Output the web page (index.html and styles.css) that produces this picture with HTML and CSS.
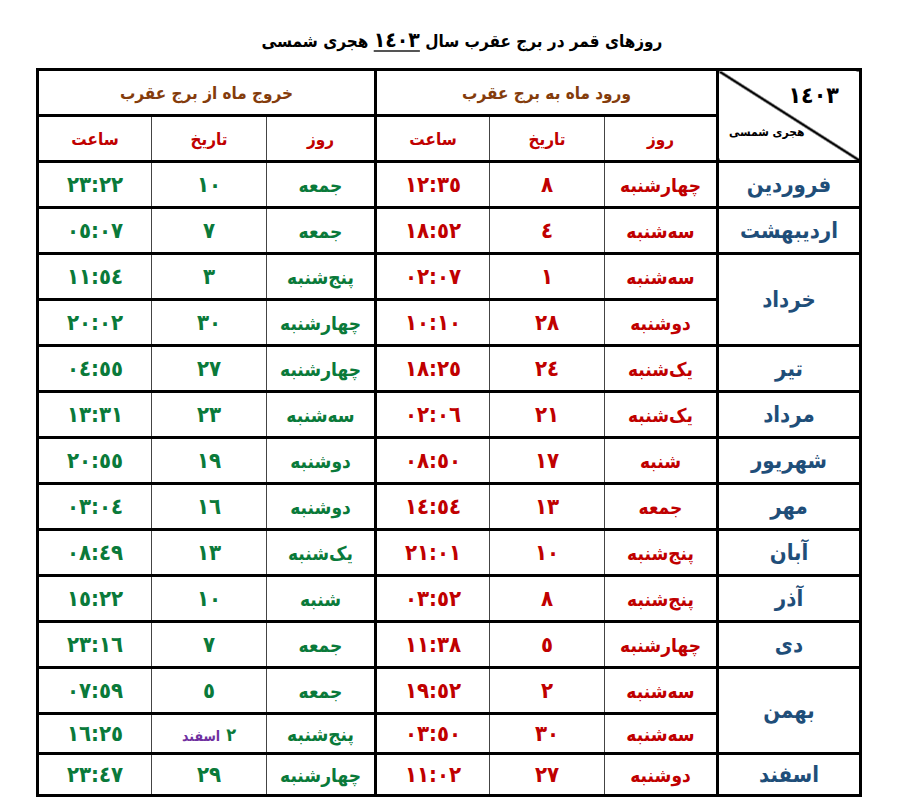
FILE: index.html
```html
<!DOCTYPE html>
<html lang="fa" dir="rtl">
<head>
<meta charset="utf-8">
<title>روزهای قمر در برج عقرب سال ١٤٠٣ هجری شمسی</title>
<link rel="stylesheet" href="styles.css">
</head>
<body>
<div class="page">
  <h1 class="title">روزهای قمر در برج عقرب سال <span class="year">١٤٠٣</span> هجری شمسی</h1>
  <table class="moon">
    <colgroup>
      <col class="c-month">
      <col class="c-a">
      <col class="c-b">
      <col class="c-c">
      <col class="c-d">
      <col class="c-e">
      <col class="c-f">
    </colgroup>
    <thead>
      <tr class="h1">
        <th rowspan="2" class="corner">
          <div class="corner-in">
            <span class="corner-year">١٤٠٣</span>
            <span class="corner-label">هجری شمسی</span>
          </div>
        </th>
        <th colspan="3" class="grp">ورود ماه به برج عقرب</th>
        <th colspan="3" class="grp">خروج ماه از برج عقرب</th>
      </tr>
      <tr class="h2">
        <th class="sub">روز</th><th class="sub">تاریخ</th><th class="sub sep">ساعت</th>
        <th class="sub">روز</th><th class="sub">تاریخ</th><th class="sub">ساعت</th>
      </tr>
    </thead>
    <tbody>
      <tr><td class="m">فروردین</td><td class="in">چهارشنبه</td><td class="in n">٨</td><td class="in n sep">١٢:٣٥</td><td class="out">جمعه</td><td class="out n">١٠</td><td class="out n">٢٣:٢٢</td></tr>
      <tr><td class="m">اردیبهشت</td><td class="in">سه‌شنبه</td><td class="in n">٤</td><td class="in n sep">١٨:٥٢</td><td class="out">جمعه</td><td class="out n">٧</td><td class="out n">٠٥:٠٧</td></tr>
      <tr><td class="m" rowspan="2">خرداد</td><td class="in">سه‌شنبه</td><td class="in n">١</td><td class="in n sep">٠٢:٠٧</td><td class="out">پنج‌شنبه</td><td class="out n">٣</td><td class="out n">١١:٥٤</td></tr>
      <tr><td class="in">دوشنبه</td><td class="in n">٢٨</td><td class="in n sep">١٠:١٠</td><td class="out">چهارشنبه</td><td class="out n">٣٠</td><td class="out n">٢٠:٠٢</td></tr>
      <tr><td class="m">تیر</td><td class="in">یک‌شنبه</td><td class="in n">٢٤</td><td class="in n sep">١٨:٢٥</td><td class="out">چهارشنبه</td><td class="out n">٢٧</td><td class="out n">٠٤:٥٥</td></tr>
      <tr><td class="m">مرداد</td><td class="in">یک‌شنبه</td><td class="in n">٢١</td><td class="in n sep">٠٢:٠٦</td><td class="out">سه‌شنبه</td><td class="out n">٢٣</td><td class="out n">١٣:٣١</td></tr>
      <tr><td class="m">شهریور</td><td class="in">شنبه</td><td class="in n">١٧</td><td class="in n sep">٠٨:٥٠</td><td class="out">دوشنبه</td><td class="out n">١٩</td><td class="out n">٢٠:٥٥</td></tr>
      <tr><td class="m">مهر</td><td class="in">جمعه</td><td class="in n">١٣</td><td class="in n sep">١٤:٥٤</td><td class="out">دوشنبه</td><td class="out n">١٦</td><td class="out n">٠٣:٠٤</td></tr>
      <tr><td class="m">آبان</td><td class="in">پنج‌شنبه</td><td class="in n">١٠</td><td class="in n sep">٢١:٠١</td><td class="out">یک‌شنبه</td><td class="out n">١٣</td><td class="out n">٠٨:٤٩</td></tr>
      <tr><td class="m">آذر</td><td class="in">پنج‌شنبه</td><td class="in n">٨</td><td class="in n sep">٠٣:٥٢</td><td class="out">شنبه</td><td class="out n">١٠</td><td class="out n">١٥:٢٢</td></tr>
      <tr><td class="m">دی</td><td class="in">چهارشنبه</td><td class="in n">٥</td><td class="in n sep">١١:٣٨</td><td class="out">جمعه</td><td class="out n">٧</td><td class="out n">٢٣:١٦</td></tr>
      <tr><td class="m" rowspan="2">بهمن</td><td class="in">سه‌شنبه</td><td class="in n">٢</td><td class="in n sep">١٩:٥٢</td><td class="out">جمعه</td><td class="out n">٥</td><td class="out n">٠٧:٥٩</td></tr>
      <tr class="short"><td class="in">سه‌شنبه</td><td class="in n">٣٠</td><td class="in n sep">٠٣:٥٠</td><td class="out">پنج‌شنبه</td><td class="out"><span class="esf-n">٢</span> <span class="esf">اسفند</span></td><td class="out n">١٦:٢٥</td></tr>
      <tr class="last"><td class="m">اسفند</td><td class="in">دوشنبه</td><td class="in n">٢٧</td><td class="in n sep">١١:٠٢</td><td class="out">چهارشنبه</td><td class="out n">٢٩</td><td class="out n">٢٣:٤٧</td></tr>
    </tbody>
  </table>
</div>
</body>
</html>
```
FILE: styles.css
```css
html, body {
  margin: 0;
  padding: 0;
  background: #fff;
}
body {
  font-family: "DejaVu Sans Condensed", "DejaVu Sans", sans-serif;
  font-weight: bold;
}
.page {
  width: 900px;
  padding-top: 22px;
}
.title {
  margin: 0 0 10px 0;
  height: 36px;
  line-height: 36px;
  font-size: 17px;
  font-weight: bold;
  color: #000;
  text-align: center;
  direction: rtl;
  padding-left: 24px;
}
.year {
  font-size: 21px;
  text-decoration: underline;
  text-decoration-color: #555;
  text-decoration-thickness: 2px;
  text-underline-offset: 3px;
}
.moon {
  direction: rtl;
  border-collapse: collapse;
  table-layout: fixed;
  width: 826px;
  margin-left: 36px;
  margin-right: auto;
  border: 3px solid #000;
}
.c-month { width: 143px; }
.c-a { width: 113px; }
.c-b { width: 115px; }
.c-c { width: 114px; }
.c-d { width: 109px; }
.c-e { width: 115px; }
.c-f { width: 114px; }

.moon th, .moon td {
  padding: 0;
  text-align: center;
  vertical-align: middle;
  border-top: 3px solid #000;
  border-bottom: 3px solid #000;
  border-left: 1px solid #444;
  border-right: 1px solid #444;
  white-space: nowrap;
}
.moon tr { height: 46px; }
.moon tr.short { height: 40px; }
.moon tr.last { height: 42px; }

.moon .m, .moon .corner {
  border-left: 3px solid #000;
  color: #1f4e79;
  font-size: 22px;
}
.moon .sep {
  border-left: 3px solid #000;
}
.grp {
  color: #843c0c;
  font-size: 17px;
}
.h1 .grp:nth-child(2) { border-left: 3px solid #000; }
.sub {
  color: #c00000;
  font-size: 17px;
}
.in {
  color: #c00000;
  font-size: 19px;
}
.out {
  color: #0a7a3a;
  font-size: 19px;
}
.moon .n {
  font-size: 22px;
}
.esf-n {
  color: #0a7a3a;
  font-size: 18px;
}
.esf {
  color: #7030a0;
  font-size: 14px;
}
.moon .corner {
  color: #000;
  background: linear-gradient(to top right, transparent calc(50% - 1.5px), #000 calc(50% - 1px), #000 calc(50% + 1px), transparent calc(50% + 1.5px));
}
.corner-in {
  display: flex;
  flex-direction: column;
  height: 86px;
  justify-content: space-between;
}
.corner-year {
  align-self: flex-start;
  font-size: 23px;
  margin-right: 20px;
  margin-top: 9px;
}
.corner-label {
  align-self: flex-end;
  font-size: 12px;
  margin-left: 10px;
  margin-bottom: 20px;
}
```
